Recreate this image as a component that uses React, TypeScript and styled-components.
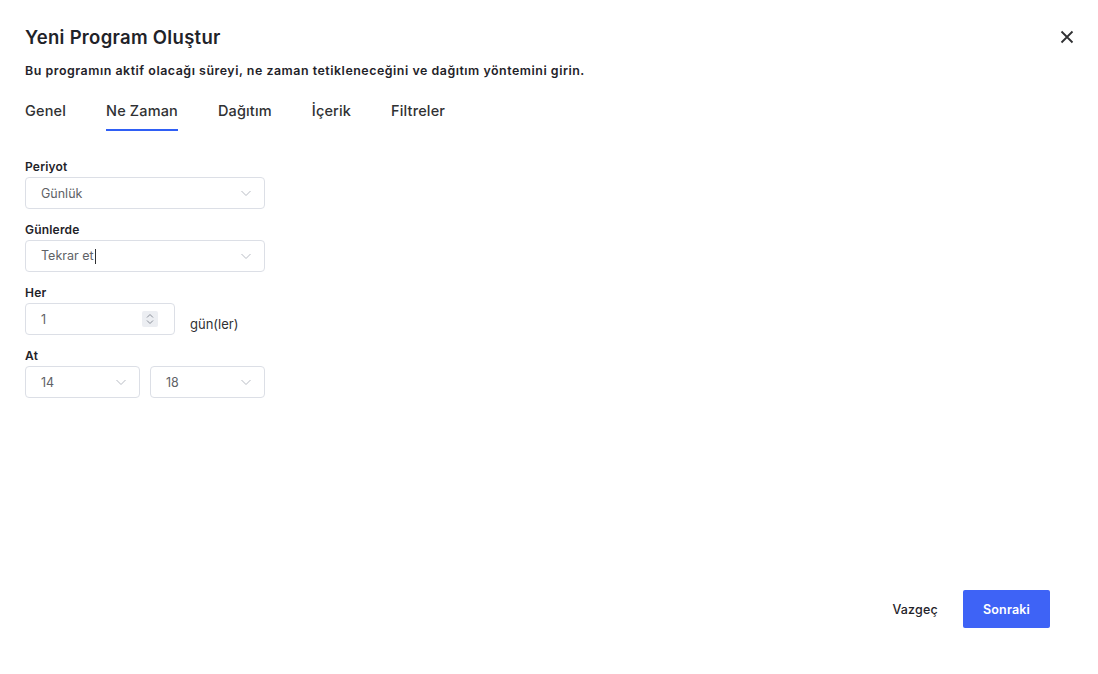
import styled, { createGlobalStyle } from "styled-components";

const GlobalStyle = createGlobalStyle`
  html, body {
    margin: 0;
    padding: 0;
    background: #ffffff;
  }
  body {
    font-family: Inter, "Noto Sans", "Liberation Sans", sans-serif;
    color: #1f2329;
  }
`;

const Dialog = styled.div`
  width: 1098px;
  height: 674px;
  box-sizing: border-box;
  padding: 24px 24px 0 25px;
  display: flex;
  flex-direction: column;
`;

const Header = styled.div`
  display: flex;
  align-items: center;
  justify-content: space-between;
  height: 26px;
`;

const Title = styled.h2`
  margin: 0;
  font-size: 18.5px;
  font-weight: 600;
  letter-spacing: 0.3px;
  color: #1f2329;
`;

const CloseButton = styled.button`
  border: none;
  background: none;
  padding: 0;
  margin-right: -1px;
  width: 16px;
  height: 16px;
  display: flex;
  align-items: center;
  justify-content: center;
  cursor: pointer;
  color: #303133;
`;

const Subtitle = styled.p`
  margin: 13px 0 0;
  font-size: 12.4px;
  font-weight: 600;
  color: #1f2329;
  letter-spacing: 0.53px;
`;

const Tabs = styled.div`
  display: flex;
  gap: 40px;
  margin-top: 24px;
`;

const Tab = styled.div<{ $active?: boolean }>`
  font-size: 14.5px;
  font-weight: 500;
  letter-spacing: 0.15px;
  color: #303133;
  padding-bottom: 10px;
  border-bottom: 2px solid ${(p) => (p.$active ? "#2f5ff5" : "transparent")};
  line-height: 17px;
  cursor: pointer;
`;

const Form = styled.div`
  display: flex;
  flex-direction: column;
  gap: 12px;
  margin-top: 27px;
`;

const Field = styled.div`
  display: flex;
  flex-direction: column;
  gap: 2px;
`;

const Label = styled.label`
  font-size: 12px;
  font-weight: 600;
  letter-spacing: 0.2px;
  color: #1f2329;
  line-height: 17px;
`;

const Row = styled.div`
  display: flex;
  align-items: center;
  gap: 10px;
`;

const Box = styled.div<{ $width: number }>`
  width: ${(p) => p.$width}px;
  height: 32px;
  box-sizing: border-box;
  border: 1px solid #dcdfe6;
  border-radius: 4px;
  display: flex;
  align-items: center;
  justify-content: space-between;
  padding: 0 12px 0 15px;
  font-size: 12.5px;
  color: #606266;
  background: #fff;
`;

const Caret = styled.span`
  display: inline-block;
  width: 1px;
  height: 15px;
  background: #303133;
  margin-left: 1px;
  vertical-align: middle;
`;

const Spinner = styled.div`
  width: 16px;
  height: 16px;
  background: #eceef2;
  border-radius: 2px;
  display: flex;
  align-items: center;
  justify-content: center;
  margin-right: 4px;
`;

const Unit = styled.span`
  font-size: 13px;
  color: #303133;
  margin-left: 5px;
  margin-top: 10px;
`;

const Footer = styled.div`
  margin-top: auto;
  display: flex;
  justify-content: flex-end;
  align-items: center;
  gap: 25px;
  padding-right: 24px;
  margin-bottom: 46px;
`;

const TextButton = styled.button`
  border: none;
  background: none;
  font-family: inherit;
  font-size: 12.5px;
  font-weight: 500;
  letter-spacing: 0.2px;
  color: #1f2329;
  cursor: pointer;
  padding: 0;
`;

const PrimaryButton = styled.button`
  border: none;
  background: #3e63f6;
  color: #fff;
  font-family: inherit;
  font-size: 12.5px;
  font-weight: 600;
  letter-spacing: 0.2px;
  width: 87px;
  height: 38px;
  border-radius: 2px;
  cursor: pointer;
`;

const Chevron = () => (
  <svg width="12" height="12" viewBox="0 0 12 12" fill="none">
    <path d="M1.5 4 L6 8.5 L10.5 4" stroke="#b8bcc4" strokeWidth="1" />
  </svg>
);

const Select = ({ width, value, caret }: { width: number; value: string; caret?: boolean }) => (
  <Box $width={width}>
    <span>
      {value}
      {caret && <Caret />}
    </span>
    <Chevron />
  </Box>
);

const tabs = ["Genel", "Ne Zaman", "Dağıtım", "İçerik", "Filtreler"];

export default function App() {
  return (
    <>
      <GlobalStyle />
      <Dialog>
        <Header>
          <Title>Yeni Program Oluştur</Title>
          <CloseButton aria-label="Kapat">
            <svg width="14" height="14" viewBox="0 0 14 14">
              <path d="M1.5 1.5 L12.5 12.5 M12.5 1.5 L1.5 12.5" stroke="#303133" strokeWidth="1.8" />
            </svg>
          </CloseButton>
        </Header>
        <Subtitle>Bu programın aktif olacağı süreyi, ne zaman tetikleneceğini ve dağıtım yöntemini girin.</Subtitle>
        <Tabs>
          {tabs.map((t) => (
            <Tab key={t} $active={t === "Ne Zaman"}>
              {t}
            </Tab>
          ))}
        </Tabs>
        <Form>
          <Field>
            <Label>Periyot</Label>
            <Select width={240} value="Günlük" />
          </Field>
          <Field>
            <Label>Günlerde</Label>
            <Select width={240} value="Tekrar et" caret />
          </Field>
          <Field>
            <Label>Her</Label>
            <Row>
              <Box $width={150}>
                <span>1</span>
                <Spinner>
                  <svg width="10" height="12" viewBox="0 0 10 12" fill="none">
                    <path d="M2 4.5 L5 1.5 L8 4.5 M2 7.5 L5 10.5 L8 7.5" stroke="#8a8f99" strokeWidth="1" />
                  </svg>
                </Spinner>
              </Box>
              <Unit>gün(ler)</Unit>
            </Row>
          </Field>
          <Field>
            <Label>At</Label>
            <Row>
              <Select width={115} value="14" />
              <Select width={115} value="18" />
            </Row>
          </Field>
        </Form>
        <Footer>
          <TextButton>Vazgeç</TextButton>
          <PrimaryButton>Sonraki</PrimaryButton>
        </Footer>
      </Dialog>
    </>
  );
}
